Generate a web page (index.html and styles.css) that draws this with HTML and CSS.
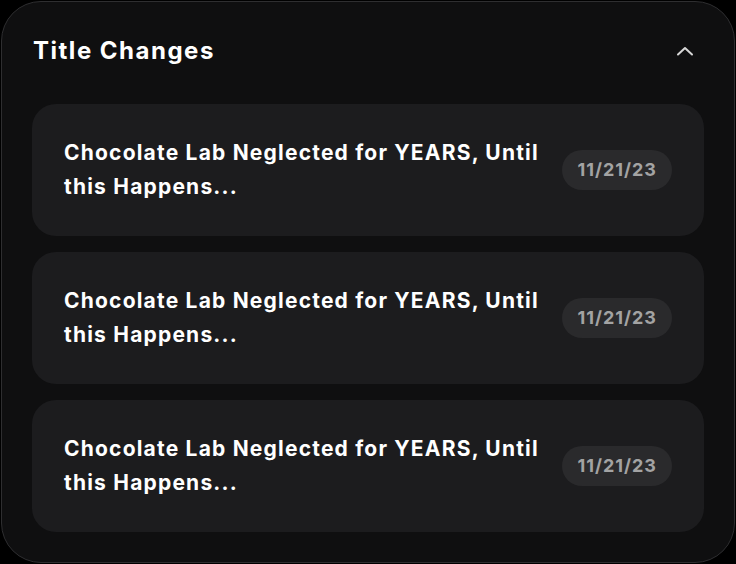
FILE: index.html
```html
<!DOCTYPE html>
<html lang="en">
<head>
  <meta charset="UTF-8">
  <title>Title Changes</title>
  <link rel="stylesheet" href="styles.css">
</head>
<body>
  <div class="panel">
    <div class="panel-header">
      <h2>Title Changes</h2>
      <svg class="chevron" width="18" height="10" viewBox="0 0 18 10">
        <path d="M2 8.5 L9 2 L16 8.5" fill="none" stroke="#d6d6d6" stroke-width="2" stroke-linecap="round" stroke-linejoin="round"/>
      </svg>
    </div>

    <div class="change-list">
      <div class="change-item">
        <p class="change-title">Chocolate Lab Neglected for YEARS, Until this Happens...</p>
        <span class="date-pill">11/21/23</span>
      </div>
      <div class="change-item">
        <p class="change-title">Chocolate Lab Neglected for YEARS, Until this Happens...</p>
        <span class="date-pill">11/21/23</span>
      </div>
      <div class="change-item">
        <p class="change-title">Chocolate Lab Neglected for YEARS, Until this Happens...</p>
        <span class="date-pill">11/21/23</span>
      </div>
    </div>
  </div>
</body>
</html>
```

FILE: styles.css
```css
body {
  margin: 0;
  background-color: #000;
  font-family: Inter, "Liberation Sans", sans-serif;
}

.panel {
  box-sizing: border-box;
  width: 734px;
  height: 562px;
  margin: 1px;
  border: 1px solid #2e2e30;
  border-radius: 40px;
  background-color: #0f0f10;
  padding: 0 30px;
}

.panel-header {
  display: flex;
  align-items: center;
  justify-content: space-between;
  height: 96px;
  margin-bottom: 6px;
  padding-left: 1px;
}

h2 {
  margin: 0;
  color: #fff;
  font-size: 24px;
  font-weight: 700;
  letter-spacing: 1.5px;
}

.chevron {
  margin-right: 10px;
  margin-top: 2px;
}

.change-list {
  display: flex;
  flex-direction: column;
  gap: 16px;
}

.change-item {
  display: flex;
  align-items: center;
  justify-content: space-between;
  height: 132px;
  box-sizing: border-box;
  padding: 0 32px;
  border-radius: 24px;
  background-color: #1c1c1e;
}

.change-title {
  margin: 0;
  width: 484px;
  color: #fff;
  font-size: 21px;
  font-weight: 700;
  line-height: 34px;
  letter-spacing: 1.2px;
}

.date-pill {
  padding: 0 15px;
  height: 40px;
  line-height: 40px;
  border-radius: 20px;
  background-color: #2a2a2c;
  color: #a3a3a3;
  font-size: 18px;
  font-weight: 700;
  letter-spacing: 1px;
}
```
